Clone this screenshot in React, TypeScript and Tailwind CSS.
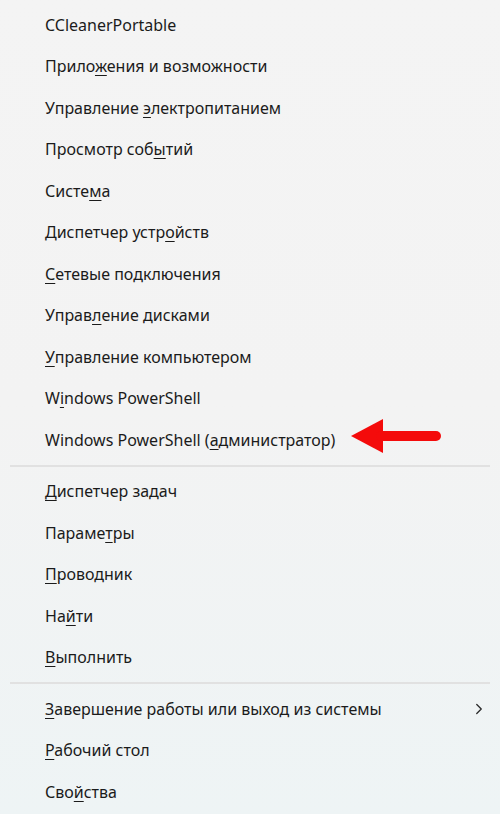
import { ChevronRight } from "lucide-react";

type Item = { label: string; sub?: boolean };

// "_" marks the accelerator letter that follows it
const groups: Item[][] = [
  [
    { label: "CCleanerPortable" },
    { label: "Прило_жения и возможности" },
    { label: "Управление _электропитанием" },
    { label: "Просмотр соб_ытий" },
    { label: "Систе_ма" },
    { label: "Диспетчер устр_ойств" },
    { label: "_Сетевые подключения" },
    { label: "Управ_ление дисками" },
    { label: "_Управление компьютером" },
    { label: "W_indows PowerShell" },
    { label: "Windows PowerShell (_администратор)" },
  ],
  [
    { label: "_Диспетчер задач" },
    { label: "Параме_тры" },
    { label: "_Проводник" },
    { label: "На_йти" },
    { label: "_Выполнить" },
  ],
  [
    { label: "_Завершение работы или выход из системы", sub: true },
    { label: "_Рабочий стол" },
    { label: "Сво_йства" },
  ],
];

function Label({ text }: { text: string }) {
  const i = text.indexOf("_");
  if (i < 0) return <span>{text}</span>;
  return (
    <span>
      {text.slice(0, i)}
      <span className="underline decoration-1 underline-offset-[3px]">{text[i + 1]}</span>
      {text.slice(i + 2)}
    </span>
  );
}

function Arrow() {
  return (
    <svg width="96" height="40" viewBox="0 0 96 40" className="absolute left-[348px] top-[-2px]">
      <polygon points="3,19 35,2 35,36" fill="#f40b0b" />
      <line x1="33" y1="19" x2="88" y2="19" stroke="#f40b0b" strokeWidth="10" strokeLinecap="round" />
    </svg>
  );
}

export default function App() {
  return (
    <div
      className="w-[500px] h-[814px] overflow-hidden bg-gradient-to-b from-[#f4f4f4] via-[#f3f3f3] to-[#eef4f5] pt-[4px] text-[16px] text-[#1b1b1b]"
      style={{ fontFamily: '"Noto Sans", "Open Sans", sans-serif' }}
    >
      {groups.map((g, gi) => (
        <div key={gi}>
          {gi > 0 && (
            <div className="h-[10px] flex items-center px-[10px]">
              <div className="h-[2px] w-full bg-[#e1e1e1]" />
            </div>
          )}
          {g.map((it) => (
            <div key={it.label} className="relative h-[41.5px] flex items-center pl-[45px] pr-[12px]">
              <Label text={it.label} />
              {it.sub && <ChevronRight size={18} strokeWidth={1.75} className="ml-auto text-[#2a2a2a]" />}
              {it.label.includes("администратор") && <Arrow />}
            </div>
          ))}
        </div>
      ))}
    </div>
  );
}
